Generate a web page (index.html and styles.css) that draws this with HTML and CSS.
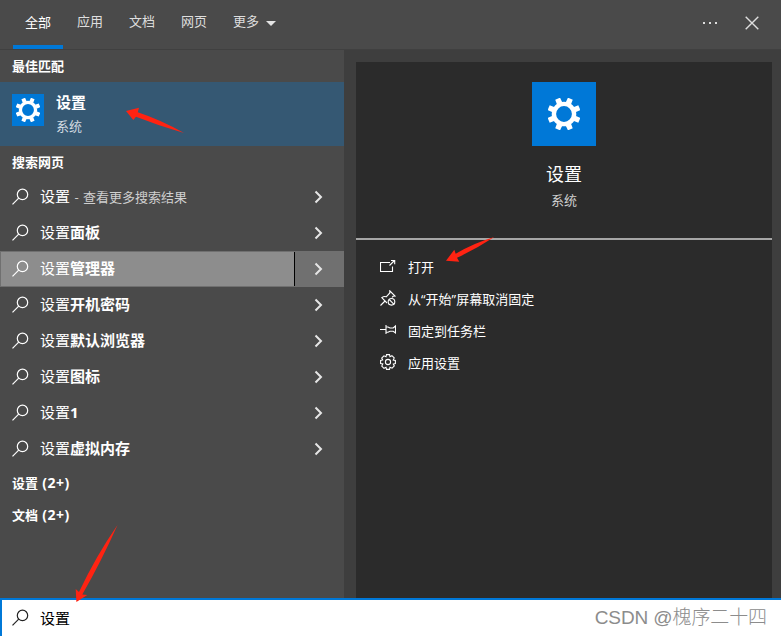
FILE: index.html
```
<!DOCTYPE html>
<html lang="zh-CN">
<head>
    <meta charset="utf-8">
    <title>搜索</title>
    <link rel="stylesheet" href="styles.css">
</head>
<body>
    <svg class="symbols" width="0" height="0">
        <symbol id="search" viewBox="0 0 18 18">
            <circle cx="10.5" cy="6.4" r="5.2"/>
            <path d="M6.7 10.2L.5 16.4"/>
        </symbol>
        <symbol id="chevron" viewBox="0 0 10 14">
            <path d="M2.5 1.5L8 7L2.5 12.5"/>
        </symbol>
        <symbol id="gear" viewBox="-16 -16 32 32">
            <circle r="10.1" fill="none" stroke="#fff" stroke-width="4.4"/>
            <g id="teeth" fill="#fff">
                <path id="tooth" d="M-2.8-11.2L-2.6-16.6H2.6L2.8-11.2Z" transform="rotate(22.5)"/>
                <use href="#tooth" transform="rotate(45)"/>
                <use href="#tooth" transform="rotate(90)"/>
                <use href="#tooth" transform="rotate(135)"/>
                <use href="#tooth" transform="rotate(180)"/>
                <use href="#tooth" transform="rotate(225)"/>
                <use href="#tooth" transform="rotate(270)"/>
                <use href="#tooth" transform="rotate(315)"/>
            </g>
        </symbol>
    </svg>

    <div class="window">
        <header class="header">
            <nav class="tabs">
                <a class="tab active">全部</a>
                <a class="tab">应用</a>
                <a class="tab">文档</a>
                <a class="tab">网页</a>
                <a class="tab more">更多<span class="caret"></span></a>
            </nav>
            <div class="controls">
                <span class="dots"><i></i><i></i><i></i></span>
                <svg class="close" viewBox="0 0 14 14"><path d="M.7.7L13.3 13.3M13.3.7L.7 13.3"/></svg>
            </div>
        </header>

        <main class="content">
            <div class="results">
                <h2 class="group-title">最佳匹配</h2>
                <div class="best-match">
                    <span class="app-icon"><svg><use href="#gear"/></svg></span>
                    <div>
                        <div class="best-name">设置</div>
                        <div class="best-type">系统</div>
                    </div>
                </div>

                <h2 class="group-title web">搜索网页</h2>
                <div class="row">
                    <svg class="search-icon"><use href="#search"/></svg>
                    <span class="label">设置<small> - 查看更多搜索结果</small></span>
                    <span class="expand"><svg><use href="#chevron"/></svg></span>
                </div>
                <div class="row">
                    <svg class="search-icon"><use href="#search"/></svg>
                    <span class="label">设置<b>面板</b></span>
                    <span class="expand"><svg><use href="#chevron"/></svg></span>
                </div>
                <div class="row hover">
                    <svg class="search-icon"><use href="#search"/></svg>
                    <span class="label">设置<b>管理器</b></span>
                    <span class="expand"><svg><use href="#chevron"/></svg></span>
                </div>
                <div class="row">
                    <svg class="search-icon"><use href="#search"/></svg>
                    <span class="label">设置<b>开机密码</b></span>
                    <span class="expand"><svg><use href="#chevron"/></svg></span>
                </div>
                <div class="row">
                    <svg class="search-icon"><use href="#search"/></svg>
                    <span class="label">设置<b>默认浏览器</b></span>
                    <span class="expand"><svg><use href="#chevron"/></svg></span>
                </div>
                <div class="row">
                    <svg class="search-icon"><use href="#search"/></svg>
                    <span class="label">设置<b>图标</b></span>
                    <span class="expand"><svg><use href="#chevron"/></svg></span>
                </div>
                <div class="row">
                    <svg class="search-icon"><use href="#search"/></svg>
                    <span class="label">设置<b>1</b></span>
                    <span class="expand"><svg><use href="#chevron"/></svg></span>
                </div>
                <div class="row">
                    <svg class="search-icon"><use href="#search"/></svg>
                    <span class="label">设置<b>虚拟内存</b></span>
                    <span class="expand"><svg><use href="#chevron"/></svg></span>
                </div>
                <h2 class="group-title">设置<span class="count"> (2+)</span></h2>
                <h2 class="group-title">文档<span class="count"> (2+)</span></h2>
            </div>

            <aside class="details">
                <div class="summary">
                    <span class="app-icon large"><svg><use href="#gear"/></svg></span>
                    <div class="app-name">设置</div>
                    <div class="app-type">系统</div>
                </div>
                <div class="actions">
                    <a class="action">
                        <svg viewBox="0 0 16 16"><path d="M10 4.5H.5v9h12V8.5M9.5 7.5L14.5 2.5M11 2.5h3.7v3.7"/></svg>
                        <span>打开</span>
                    </a>
                    <a class="action">
                        <svg viewBox="0 0 16 16"><path d="M.5 15.5L5 11M7 13L1.8 7.6C3.5 6.4 5 6.4 6.2 6.8L9.8 3V.8L15 6l-2 .3-1 1.2"/><circle cx="11.5" cy="11.8" r="3.3"/><path d="M9.2 9.5L13.8 14.1"/></svg>
                        <span>从<q>“</q>开始<q>”</q>屏幕取消固定</span>
                    </a>
                    <a class="action">
                        <svg viewBox="0 0 16 16"><path d="M0 7.5h6M6 3v9M6 5h2l2 1h3.2L15.5 4v7L13.2 9.2H10l-2 1H6"/></svg>
                        <span>固定到任务栏</span>
                    </a>
                    <a class="action">
                        <svg viewBox="-8 -8 16 16"><path d="M-1.5-7.4H1.5L2-5.3L3.9-6.3L6.2-4.1L5.2-2L7.4-1.5V1.5L5.3 2L6.3 4L4.1 6.2L2 5.2L1.5 7.4H-1.5L-2 5.3L-4 6.3L-6.2 4.1L-5.2 2L-7.4 1.5V-1.5L-5.3-2L-6.3-4L-4.1-6.2L-2-5.2Z"/><circle r="2.6"/></svg>
                        <span>应用设置</span>
                    </a>
                </div>
            </aside>
        </main>

        <footer class="search-bar">
            <svg class="search-icon"><use href="#search"/></svg>
            <span class="query">设置</span>
            <span class="watermark">CSDN @槐序二十四</span>
        </footer>

        <svg class="arrows" viewBox="0 0 781 636">
            <path d="M126 111L139 107.7L137.8 112.3Q161 120 184 133Q159 126 136 116.8L133.3 120Z"/>
            <path d="M446 260.8L454.3 249.7L455.7 253.7Q474 243 494.3 237Q476 249 457 257.8L459.3 261.8Z"/>
            <path d="M76.4 602L75.7 589L79 592Q96 556 117.5 525Q101 562 82.3 594.5L87.3 595Z"/>
        </svg>
    </div>
</body>
</html>
```
FILE: styles.css
```
* {
    box-sizing: border-box;
}

body {
    margin: 0;
    font-family: "Open Sans", "Noto Sans CJK SC", sans-serif;
    font-size: 13px;
    color: #fff;
    background-color: #3e3e3e;
}

svg {
    display: block;
    fill: none;
    stroke: #fff;
    stroke-width: 1.2;
}

.symbols {
    position: absolute;
}

.window {
    position: relative;
    display: flex;
    flex-direction: column;
    width: 781px;
    height: 636px;
    overflow: hidden;
}

.header {
    display: flex;
    justify-content: space-between;
    height: 50px;
    padding-left: 12px;
    background-color: #4a4a4a;
    border-bottom: 1px solid #404040;
}

.tabs {
    display: flex;
}

.tab {
    height: 49px;
    padding: 0 13px;
    line-height: 43px;
    color: #dedede;
}

.tab.active {
    padding: 0 12px;
    margin: 0 1px;
    line-height: 45px;
    color: #fff;
    border-bottom: 4px solid #0078d7;
}

.tab.more {
    display: flex;
    align-items: flex-start;
    gap: 7px;
}

.caret {
    margin-top: 21px;
    border: 5px solid transparent;
    border-top-color: #e4e4e4;
    border-bottom: none;
}

.controls {
    display: flex;
    align-items: center;
    gap: 28px;
    padding: 0 22px 3px 0;
}

.dots {
    display: flex;
    gap: 4px;
}

.dots i {
    width: 2px;
    height: 2px;
    background-color: #dedede;
}

.close {
    width: 14px;
    height: 14px;
    stroke: #dedede;
    stroke-width: 1.4;
}

.content {
    display: flex;
    flex: 1;
}

.results {
    width: 344px;
    background-color: #4a4a4a;
}

.group-title {
    height: 32px;
    margin: 0;
    padding-left: 12px;
    font-size: 13px;
    font-weight: 700;
    line-height: 32px;
}

.group-title.web {
    height: 33px;
}

.count {
    font-size: 14px;
    line-height: 1;
    letter-spacing: 0.5px;
}

.best-match {
    display: flex;
    height: 64px;
    padding: 12px;
    gap: 12px;
    background-color: #355873;
}

.app-icon {
    display: flex;
    align-items: center;
    justify-content: center;
    width: 32px;
    height: 32px;
    background-color: #0078d7;
}

.app-icon svg {
    width: 24px;
    height: 24px;
    stroke: none;
}

.app-icon.large {
    width: 64px;
    height: 64px;
}

.app-icon.large svg {
    width: 32px;
    height: 32px;
}

.app-icon svg,
.app-icon symbol {
    overflow: visible;
}

.best-name {
    margin-top: -2px;
    font-size: 15px;
    font-weight: 700;
    line-height: 20px;
}

.best-type {
    margin-top: 4px;
    line-height: 20px;
    color: #d3dbe1;
}

.row {
    display: flex;
    align-items: center;
    height: 36px;
    padding-left: 12px;
}

.search-icon {
    width: 18px;
    height: 18px;
    margin-right: 10px;
}

.label {
    flex: 1;
    height: 34px;
    font-size: 15px;
    line-height: 32px;
}

.label small {
    font-size: 13px;
    word-spacing: 1px;
    color: #cfcfcf;
}

.expand {
    display: flex;
    align-items: center;
    width: 50px;
    height: 34px;
    padding-left: 19px;
}

.expand svg {
    width: 10px;
    height: 14px;
    stroke: #e6e6e6;
    stroke-width: 2;
}

.row.hover {
    padding-left: 11px;
    background-color: #8d8d8d;
    border: 1px solid #707070;
    border-right: none;
}

.row.hover .expand {
    background-color: #707070;
    border-left: 1px solid #000;
    padding-left: 18px;
}

.details {
    width: 416px;
    margin: 12px 0 0 12px;
    background-color: #2b2b2b;
}

.summary {
    display: flex;
    flex-direction: column;
    align-items: center;
    height: 178px;
    padding-top: 20px;
    border-bottom: 2px solid #a6a6a6;
}

.app-name {
    margin-top: 16px;
    font-size: 18px;
    line-height: 24px;
}

.app-type {
    margin-top: 4px;
    line-height: 20px;
    color: #d0d0d0;
}

.actions {
    padding: 10px 24px;
}

.action {
    display: flex;
    align-items: center;
    gap: 12px;
    height: 32px;
    font-family: "Noto Sans CJK SC", sans-serif;
}

.action svg {
    width: 16px;
    height: 16px;
    stroke-width: 1.1;
}

.action q {
    font-family: "Open Sans", sans-serif;
    quotes: none;
}

.search-bar {
    display: flex;
    align-items: center;
    height: 38px;
    padding: 0 14px 0 10px;
    background-color: #fff;
    border-top: 2px solid #0078d7;
    border-left: 2px solid #0078d7;
}

.search-bar .search-icon {
    stroke: #222;
}

.query {
    padding-bottom: 2px;
    font-size: 15px;
    color: #000;
}

.watermark {
    margin-left: auto;
    padding-bottom: 5px;
    font-family: "Liberation Sans", "Noto Sans CJK SC", sans-serif;
    font-size: 19px;
    font-weight: 300;
    letter-spacing: -0.1px;
    color: #8c8c8c;
}

.arrows {
    position: absolute;
    inset: 0;
    width: 781px;
    height: 636px;
    fill: #ff2312;
    stroke: none;
    pointer-events: none;
}
```
